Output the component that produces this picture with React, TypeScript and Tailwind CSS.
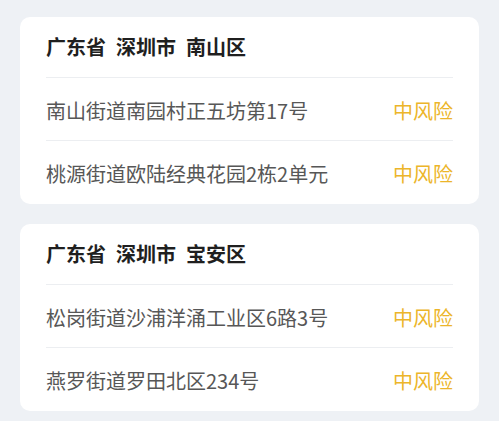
import React from 'react';

type Area = {
  title: string[];
  rows: { address: string; level: string }[];
};

const areas: Area[] = [
  {
    title: ['广东省', '深圳市', '南山区'],
    rows: [
      { address: '南山街道南园村正五坊第17号', level: '中风险' },
      { address: '桃源街道欧陆经典花园2栋2单元', level: '中风险' },
    ],
  },
  {
    title: ['广东省', '深圳市', '宝安区'],
    rows: [
      { address: '松岗街道沙浦洋涌工业区6路3号', level: '中风险' },
      { address: '燕罗街道罗田北区234号', level: '中风险' },
    ],
  },
];

function AreaCard({ area }: { area: Area }) {
  return (
    <div className="bg-white rounded-[10px] px-[26px]">
      <div className="h-[61px] flex items-center gap-[10px] border-b border-[#eceef1]">
        {area.title.map((word, i) => (
          <span key={i} className="text-[20px] font-bold text-[#1f1f1f]">
            {word}
          </span>
        ))}
      </div>
      {area.rows.map((row, index) => (
        <div
          key={index}
          className={
            'h-[63px] pt-[3px] flex items-center justify-between ' +
            (index < area.rows.length - 1 ? 'border-b border-[#eceef1]' : '')
          }
        >
          <span className="text-[20px] text-[#575757]">{row.address}</span>
          <span className="text-[20px] text-[#ecb52a]">{row.level}</span>
        </div>
      ))}
    </div>
  );
}

export default function App() {
  return (
    <div
      className="w-[499px] h-[421px] bg-[#eef1f5] px-5 pt-[17px] flex flex-col gap-[20px] overflow-hidden"
      style={{ fontFamily: '"Noto Sans CJK SC", "Noto Sans", sans-serif' }}
    >
      {areas.map((area, index) => (
        <AreaCard key={index} area={area} />
      ))}
    </div>
  );
}
